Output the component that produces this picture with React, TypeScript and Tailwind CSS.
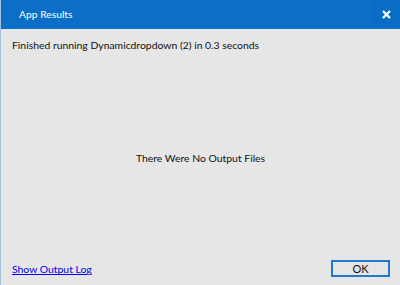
import React from 'react';

export default function App() {
  return (
    <div
      className="w-[400px] h-[285px] flex flex-col bg-[#e6e6e6] border-l border-[#a9c1e0] overflow-hidden"
      style={{ fontFamily: 'Lato, "Noto Sans", sans-serif' }}
    >
      {/* Title bar */}
      <div className="h-[29px] flex items-center bg-[#0b6fc7] text-white shrink-0">
        <span className="pl-[18px] text-[10.3px] flex-1">App Results</span>
        <div className="w-[28px] h-full flex items-center justify-center bg-[#0a6dc5]">
          <svg width="9" height="9" viewBox="0 0 9 9">
            <path d="M1 1 L8 8 M8 1 L1 8" stroke="white" strokeWidth="2.2" />
          </svg>
        </div>
      </div>

      {/* Body */}
      <div className="flex-1 flex flex-col text-[#111] text-[10.4px]">
        <div className="pl-[11px] pt-[9px]">Finished running Dynamicdropdown (2) in 0.3 seconds</div>
        <div className="flex-1 flex items-center justify-center pt-[4px]">There Were No Output Files</div>
        <div className="flex items-center justify-between pl-[11px] pr-[10px] pb-[7px]">
          <a href="#" className="text-[#0000ee] underline underline-offset-1 mt-[3px]">Show Output Log</a>
          <button className="w-[59px] h-[17px] border-2 border-[#1f78d1] bg-[#e5e5e5] flex items-center justify-center text-[11px] leading-none">
            OK
          </button>
        </div>
      </div>
    </div>
  );
}
